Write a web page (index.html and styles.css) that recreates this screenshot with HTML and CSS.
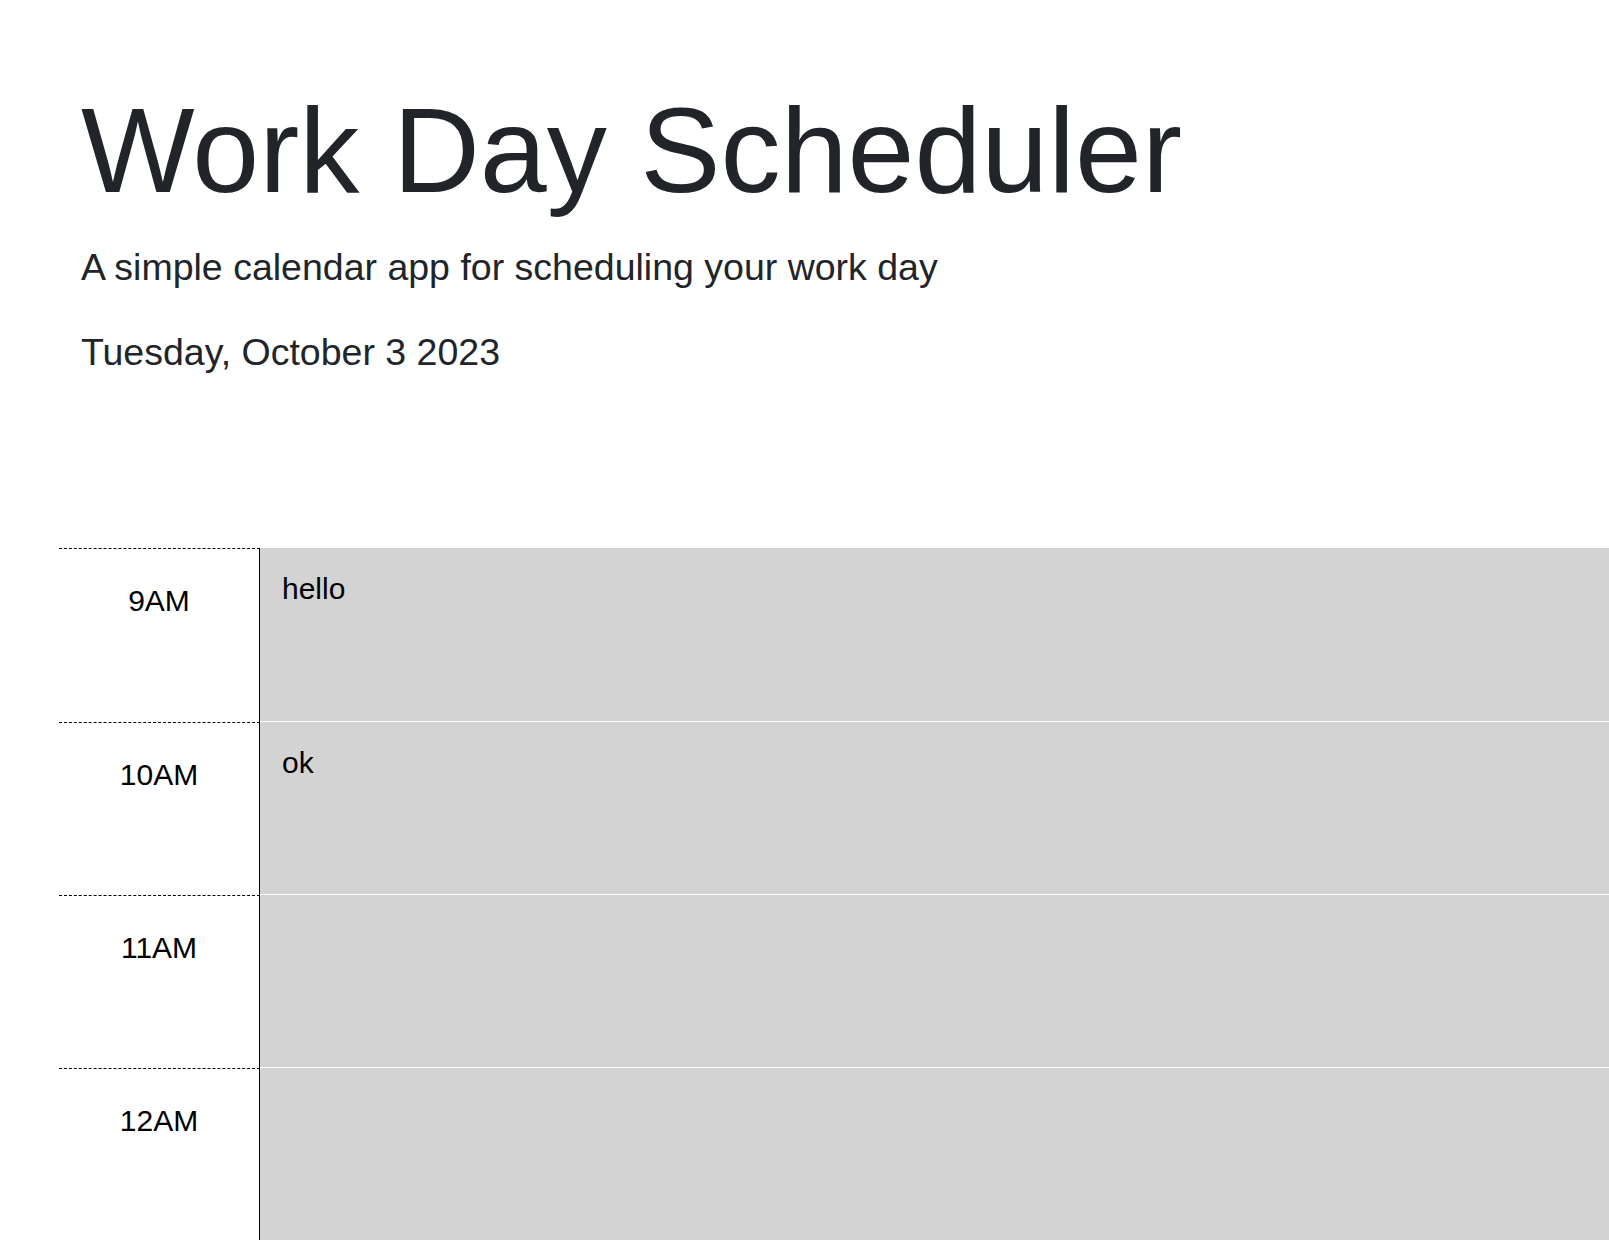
FILE: index.html
```
<!DOCTYPE html>
<html lang="en">
<head>
<meta charset="utf-8">
<title>Work Day Scheduler</title>
<link rel="stylesheet" href="styles.css">
</head>
<body>
<header class="jumbotron">
  <h1 class="display">Work Day Scheduler</h1>
  <p class="lead">A simple calendar app for scheduling your work day</p>
  <p class="lead current-day">Tuesday, October 3 2023</p>
</header>
<main class="schedule">
  <div class="time-block"><div class="hour">9AM</div><textarea class="description">hello</textarea></div>
  <div class="time-block"><div class="hour">10AM</div><textarea class="description">ok</textarea></div>
  <div class="time-block"><div class="hour">11AM</div><textarea class="description"></textarea></div>
  <div class="time-block"><div class="hour">12AM</div><textarea class="description"></textarea></div>
  <div class="time-block"><div class="hour">1PM</div><textarea class="description"></textarea></div>
  <div class="time-block"><div class="hour">2PM</div><textarea class="description"></textarea></div>
  <div class="time-block"><div class="hour">3PM</div><textarea class="description"></textarea></div>
  <div class="time-block"><div class="hour">4PM</div><textarea class="description"></textarea></div>
  <div class="time-block"><div class="hour">5PM</div><textarea class="description"></textarea></div>
</main>
</body>
</html>
```
FILE: styles.css
```
html {
  overflow: hidden;
}

body {
  margin: 0;
  font-family: "Liberation Sans", Arial, Helvetica, sans-serif;
  color: #212529;
  background: #ffffff;
}

.jumbotron {
  padding: 78px 0 0 81px;
  margin-bottom: 168px;
}

.display {
  margin: 0 0 16.5px;
  font-size: 120.3px;
  font-weight: 400;
  line-height: 1.2;
}

.lead {
  margin: 0 0 29px;
  font-size: 37.5px;
  line-height: 1.5;
}

.current-day {
  margin-bottom: 0;
}

.schedule {
  margin-left: 59px;
}

.time-block {
  display: flex;
  height: 173.33px;
}

.hour {
  box-sizing: border-box;
  width: 201px;
  flex: none;
  padding-top: 29px;
  border-top: 1px dashed #000000;
  border-right: 1px solid #000000;
  background: #ffffff;
  color: #000000;
  text-align: center;
  font-size: 30px;
  line-height: 1.5;
}

.description {
  box-sizing: border-box;
  flex: 1;
  min-width: 0;
  margin: 0;
  padding: 18px 22px 17px;
  border: none;
  border-bottom: 1px solid #ffffff;
  background: #d3d3d3;
  color: #000000;
  font-family: "Liberation Sans", Arial, Helvetica, sans-serif;
  font-size: 30px;
  line-height: 1.5;
  resize: none;
  outline: none;
}
```
